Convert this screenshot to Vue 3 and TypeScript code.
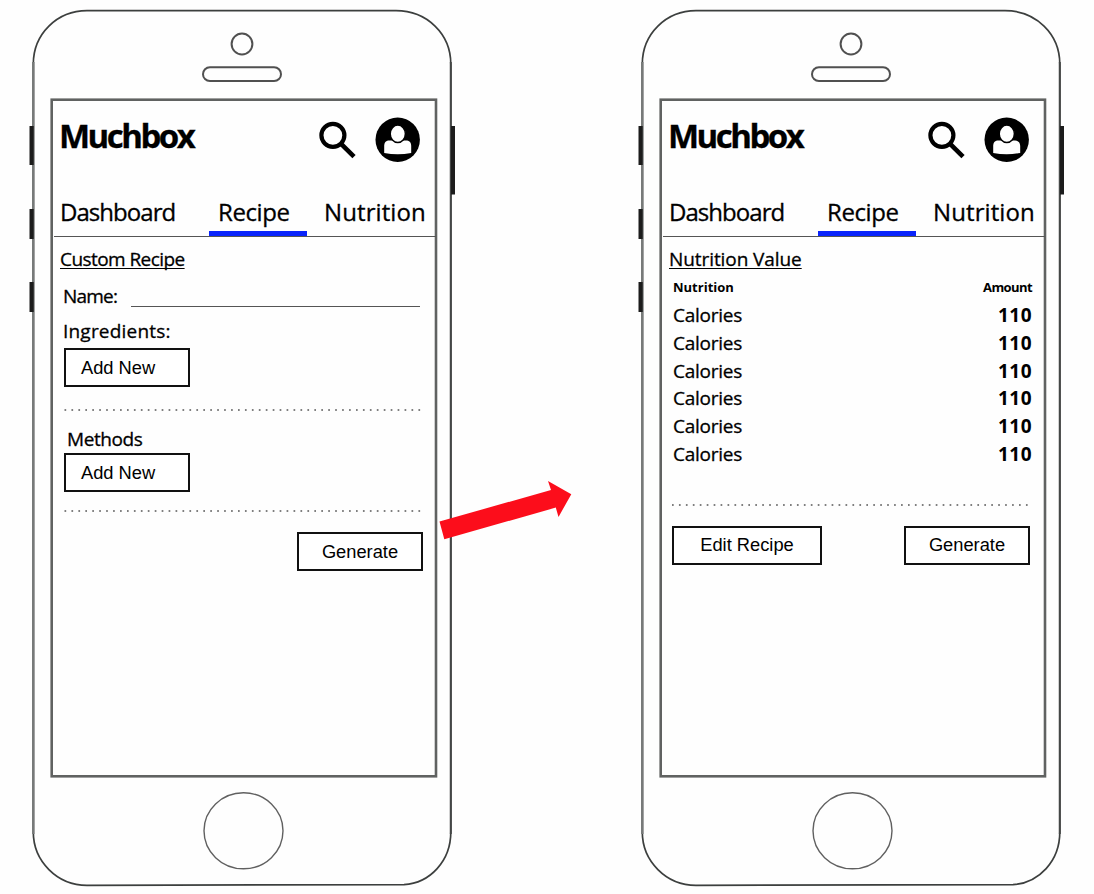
<script setup lang="ts">
interface Nutrient {
  label: string
  amount: number
}

interface Phone {
  id: string
  view: 'recipe' | 'nutrition'
}

const phones: Phone[] = [
  { id: 'custom', view: 'recipe' },
  { id: 'value', view: 'nutrition' },
]

const tabs: string[] = ['Dashboard', 'Recipe', 'Nutrition']

const nutrients: Nutrient[] = Array.from({ length: 6 }, () => ({ label: 'Calories', amount: 110 }))
</script>

<template>
  <main class="board">
    <section v-for="phone in phones" :key="phone.id" class="phone">
      <svg class="shell" width="485" height="894" viewBox="0 0 485 894" fill="none" aria-hidden="true">
        <path d="M33.3 64C33.3 34 57 10.6 87 10.6H396C427 10.6 450.8 34 450.8 64V832C450.8 861 430 883 404 884.6L87 885.3C57 885.3 33.3 861 33.3 832Z" stroke="#3c3f3e" stroke-width="1.7" />
        <path d="M33.3 62V834" stroke="#777a79" stroke-width="2.6" />
        <path d="M450.8 62V834" stroke="#444746" stroke-width="2" />
        <path d="M31.6 126V165M31.6 209V239M31.6 282V312" stroke="#1c1c1c" stroke-width="4.2" />
        <path d="M453 126V194.5" stroke="#1c1c1c" stroke-width="4" />
        <circle cx="242" cy="44" r="10.4" stroke="#505050" stroke-width="2" />
        <rect x="203" y="67.3" width="78" height="13.8" rx="6.9" stroke="#505050" stroke-width="2" />
        <rect x="51.7" y="99.7" width="384.3" height="676.6" stroke="#606261" stroke-width="2.6" />
        <ellipse cx="243.5" cy="830.8" rx="39.5" ry="38" stroke="#606060" stroke-width="1.4" />
      </svg>

      <div class="screen">
        <header class="header">
          <h1 class="brand">Muchbox</h1>
          <svg class="icons" width="104" height="48" viewBox="318 116 104 48" aria-hidden="true">
            <circle cx="332.9" cy="135.3" r="11.5" fill="none" stroke="#000" stroke-width="4.2" />
            <path d="M341.6 144.4L354 156.6" stroke="#000" stroke-width="4.6" />
            <circle cx="397.7" cy="139.8" r="22.2" fill="#000" />
            <path d="M384.2 153V146C384.2 142.4 386.3 140.6 389.4 140.6H406C409.1 140.6 411.2 142.4 411.2 146V153Q397.7 155.4 384.2 153Z" fill="#fff" />
            <ellipse cx="397.8" cy="133.8" rx="7.6" ry="8.7" fill="#fff" stroke="#000" stroke-width="1.5" />
          </svg>
        </header>

        <nav class="tabs">
          <a v-for="tab in tabs" :key="tab" class="tab" :class="[tab.toLowerCase(), { active: tab === 'Recipe' }]">{{ tab }}</a>
        </nav>

        <div v-if="phone.view === 'recipe'" class="content">
          <h2 class="heading custom-heading">Custom Recipe</h2>
          <label class="field">
            <span class="name-label">Name:</span>
            <span class="field-line"></span>
          </label>
          <p class="label ingredients">Ingredients:</p>
          <button class="btn add">Add New</button>
          <svg class="dots dots-ingredients" width="358" height="2"><line x1="0.5" y1="1" x2="357" y2="1" /></svg>
          <p class="label methods">Methods</p>
          <button class="btn add">Add New</button>
          <svg class="dots dots-methods" width="358" height="2"><line x1="0.5" y1="1" x2="357" y2="1" /></svg>
          <div class="actions end">
            <button class="btn">Generate</button>
          </div>
        </div>

        <div v-else class="content">
          <h2 class="heading value-heading">Nutrition Value</h2>
          <div class="row row-head">
            <span>Nutrition</span>
            <span class="amount-head">Amount</span>
          </div>
          <div v-for="(item, i) in nutrients" :key="i" class="row">
            <span class="nutrient">{{ item.label }}</span>
            <span class="amount">{{ item.amount }}</span>
          </div>
          <svg class="dots dots-nutrition" width="358" height="2"><line x1="0" y1="1" x2="357" y2="1" /></svg>
          <div class="actions">
            <button class="btn raised edit">Edit Recipe</button>
            <button class="btn raised">Generate</button>
          </div>
        </div>
      </div>
    </section>

    <svg class="arrow" width="136" height="62" viewBox="438 480 136 62" aria-hidden="true">
      <polygon points="439.5,521.5 551,490 548,481 571.3,494.2 558.5,517 555.8,507.6 444.3,539.2" fill="#fc0d1b" />
    </svg>
  </main>
</template>

<style>
body {
  margin: 0;
  background: #fefefe;
}
</style>

<style scoped>
.board {
  position: relative;
  display: flex;
  width: 1094px;
  height: 894px;
  overflow: hidden;
  background: #fefefe;
  color: #000;
  font-family: "Comic Sans MS", "Open Sans", sans-serif;
  -webkit-text-stroke: 0.3px #000;
}

.phone {
  position: relative;
  flex: 0 0 609px;
  height: 894px;
}

.shell {
  position: absolute;
  inset: 0 auto auto 0;
}

.screen {
  position: relative;
  width: 382px;
  margin: 101px 0 0 53px;
}

.header {
  display: flex;
  justify-content: space-between;
  height: 95px;
  padding: 0 13px 0 6px;
  box-sizing: border-box;
}

.brand {
  margin: 13px 0 0;
  font-size: 33px;
  line-height: 44px;
  font-weight: 700;
  letter-spacing: -2.5px;
}

.icons {
  margin-top: 15px;
}

.tabs {
  display: grid;
  grid-template-columns: 156px 97px 1fr;
  height: 40px;
  margin-left: 1px;
  margin-right: -1px;
  border-bottom: 1px solid #555;
  font-size: 24px;
  line-height: 32px;
}

.tab {
  box-sizing: border-box;
  white-space: nowrap;
}

.dashboard {
  padding-left: 6px;
  letter-spacing: -0.95px;
}

.recipe {
  padding-left: 9px;
  letter-spacing: -0.4px;
  margin-left: -1px;
}

.nutrition {
  padding-left: 17px;
  letter-spacing: 0.1px;
}

.active {
  height: 40px;
  border-bottom: 5px solid #0a24fb;
}

.content {
  display: flex;
  flex-direction: column;
  align-items: flex-start;
  padding: 8px 0 0 11px;
  font-size: 19px;
  line-height: 28px;
}

.heading {
  margin: 0 0 9px -4px;
  height: 28px;
  font-size: 19px;
  line-height: 28px;
  font-weight: 400;
  text-decoration: underline;
  text-decoration-thickness: 1px;
  text-underline-offset: 2px;
  text-decoration-skip-ink: none;
}

.custom-heading {
  letter-spacing: -0.57px;
}

.value-heading {
  margin-bottom: 4px;
  letter-spacing: -0.08px;
}

.field {
  display: flex;
  height: 28px;
  margin-left: -1px;
}

.name-label {
  width: 68px;
  letter-spacing: -0.8px;
}

.field-line {
  width: 289px;
  height: 24px;
  border-bottom: 1px solid #555;
}

.label {
  margin: 7px 0 3px -1px;
  height: 28px;
}

.ingredients {
  letter-spacing: 0.2px;
}

.methods {
  margin: 14px 0 0 3px;
  letter-spacing: -0.4px;
}

.btn {
  box-sizing: border-box;
  width: 126px;
  height: 39px;
  padding: 0;
  border: 2px solid #111;
  background: #fff;
  color: #000;
  font-family: "Liberation Sans", Arial, sans-serif;
  font-size: 18.3px;
  line-height: 35px;
  text-align: center;
  -webkit-text-stroke: 0;
}

.add {
  padding-left: 15px;
  text-align: left;
}

.raised {
  line-height: 33px;
  padding-bottom: 2px;
}

.edit {
  width: 150px;
}

.dots {
  display: block;
}

.dots line {
  stroke: #555;
  stroke-width: 1.7;
  stroke-dasharray: 1.7 5.24;
}

.dots-ingredients {
  margin-top: 22px;
}

.dots-methods {
  margin-top: 18px;
}

.dots-nutrition {
  margin: 36px 0 0 -1px;
}

.actions {
  display: flex;
  justify-content: space-between;
  width: 358px;
  margin: 20px 0 0 -1px;
}

.end {
  justify-content: flex-end;
  margin-left: 1px;
}

.row {
  display: flex;
  justify-content: space-between;
  width: 359px;
  height: 27.8px;
}

.row-head {
  height: 24px;
  font-size: 13px;
  line-height: 20px;
  font-weight: 700;
  -webkit-text-stroke: 0;
}

.amount-head {
  letter-spacing: -0.6px;
}

.nutrient {
  letter-spacing: -0.25px;
}

.amount {
  font-weight: 700;
  letter-spacing: 0.5px;
  -webkit-text-stroke: 0;
}

.arrow {
  position: absolute;
  left: 438px;
  top: 480px;
}
</style>
